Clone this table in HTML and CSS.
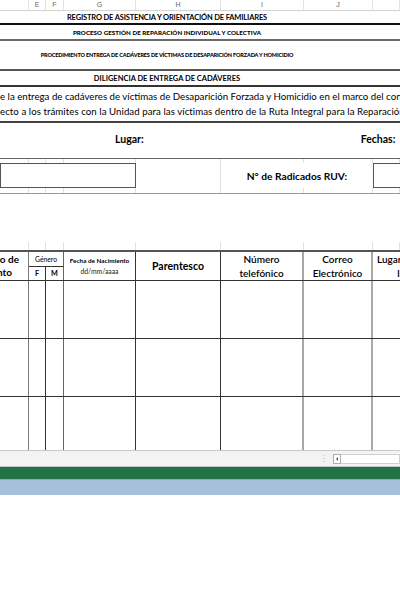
FILE: index.html
```html
<!DOCTYPE html>
<html lang="es">
<head>
<meta charset="utf-8">
<title>Registro de asistencia</title>
<link rel="stylesheet" href="styles.css">
</head>
<body>
<div class="colhead cols">
  <div></div><div>E</div><div>F</div><div>G</div><div>H</div><div>I</div><div>J</div><div></div>
</div>
<div class="band t1"><span>REGISTRO DE ASISTENCIA Y ORIENTACIÓN DE FAMILIARES</span></div>
<div class="band t2"><span>PROCESO GESTIÓN DE REPARACIÓN INDIVIDUAL Y COLECTIVA</span></div>
<div class="band t3"><span>PROCEDIMIENTO ENTREGA DE CADÁVERES DE VÍCTIMAS DE DESAPARICIÓN FORZADA Y HOMICIDIO</span></div>
<div class="band t4"><span>DILIGENCIA DE ENTREGA DE CADÁVERES</span></div>
<div class="para">
  <p>e la entrega de cadáveres de víctimas de Desaparición Forzada y Homicidio en el marco del con</p>
  <p>ecto a los trámites con la Unidad para las víctimas dentro de la Ruta Integral para la Reparación</p>
</div>
<div class="lugar"><span class="lug">Lugar:</span><span class="fech">Fechas:</span></div>
<div class="cols stub"><div></div><div></div><div></div><div></div><div></div><div></div><div></div><div></div></div>
<div class="cols boxrow">
  <div class="box1"></div>
  <div class="gl"></div>
  <div class="ruv">N° de Radicados RUV:</div>
  <div class="box2"></div>
</div>
<div class="cols stub last"><div></div><div></div><div></div><div></div><div></div><div></div><div></div><div></div></div>
<div class="gap"></div>
<div class="cols stub2"><div></div><div></div><div></div><div></div><div></div><div></div><div></div><div></div></div>
<div class="tbl">
  <div class="cols thead">
    <div class="h c1 doc"><span class="l1">Número de</span><span class="l2">documento</span></div>
    <div class="h gen">Género</div>
    <div class="h f c2">F</div>
    <div class="h m c3">M</div>
    <div class="h c4 fecha"><b>Fecha de Nacimiento</b><span>dd/mm/aaaa</span></div>
    <div class="h c5 par">Parentesco</div>
    <div class="h c6 big">Número<br>telefónico</div>
    <div class="h c7 big">Correo<br>Electrónico</div>
    <div class="h c8 lug2"><span>Lugar de</span><span class="sub">I</span></div>
  </div>
  <div class="cols drow"><div class="c1"></div><div class="c2"></div><div class="c3"></div><div class="c4"></div><div class="c5"></div><div class="c6"></div><div class="c7"></div><div class="c8"></div></div>
  <div class="cols drow"><div class="c1"></div><div class="c2"></div><div class="c3"></div><div class="c4"></div><div class="c5"></div><div class="c6"></div><div class="c7"></div><div class="c8"></div></div>
  <div class="cols drow"><div class="c1"></div><div class="c2"></div><div class="c3"></div><div class="c4"></div><div class="c5"></div><div class="c6"></div><div class="c7"></div><div class="c8"></div></div>
</div>
<div class="status">
  <span class="dots">⋮</span>
  <div class="scroll"><span class="sbtn"><i></i></span><span class="track"></span></div>
</div>
<div class="green"></div>
<div class="blue"></div>
</body>
</html>
```
FILE: styles.css
```css
* { box-sizing: border-box; margin: 0; padding: 0; }
body {
  margin: 0;
  width: 400px;
  height: 600px;
  overflow: hidden;
  background: #fff;
  font-family: Lato, "Liberation Sans", sans-serif;
  color: #000;
}
.cols {
  display: grid;
  grid-template-columns: 29px 17px 18px 72px 85px 83px 69px 27px;
}
.colhead {
  height: 11px;
  border-bottom: 1px solid #d4d4d4;
  font-size: 7px;
  color: #666;
  font-family: "Liberation Sans", sans-serif;
}
.colhead > div {
  border-right: 1px solid #e2e2e2;
  text-align: center;
  line-height: 10px;
}
.band {
  display: flex;
  justify-content: center;
  align-items: center;
  padding-right: 66px;
  white-space: nowrap;
  font-weight: 700;
}
.t1 { height: 14px; border-bottom: 2px solid #111; font-size: 7.5px; letter-spacing: -0.15px; }
.t2 { height: 16px; border-bottom: 2px solid #6a6a6a; font-size: 6.2px; font-weight: 900; letter-spacing: 0.05px; }
.t3 { height: 30px; border-bottom: 2px solid #555; font-size: 5.5px; font-weight: 900; letter-spacing: -0.15px; }
.t4 { height: 16px; border-bottom: 2px solid #333; font-size: 7.5px; }
.para {
  height: 36px;
  border-bottom: 2px solid #444;
  padding-top: 2px;
  font-size: 9.7px;
  line-height: 15px;
  white-space: nowrap;
  overflow: hidden;
}
.para p:last-child { letter-spacing: 0.05px; }
.lugar {
  height: 36px;
  border-bottom: 1px solid #666;
  padding-top: 8px;
  line-height: 17px;
  font-size: 10.5px;
  font-weight: 700;
  display: flex;
  white-space: nowrap;
}
.lug { margin-left: 115px; }
.fech { margin-left: 217px; }
.stub { height: 4px; }
.stub.last { height: 6px; border-bottom: 1px solid #999; }
.stub > div, .stub2 > div { border-right: 1px solid #e0e0e0; }
.gap { height: 48px; }
.stub2 { height: 8px; }
.boxrow { height: 25px; }
.box1 { grid-column: 1 / 5; border: 1px solid #555; }
.gl { border-right: 1px solid #e0e0e0; }
.ruv {
  grid-column: 6 / 8;
  display: flex;
  align-items: center;
  justify-content: center;
  font-weight: 700;
  font-size: 10.2px;
  white-space: nowrap;
}
.box2 { border: 1px solid #555; border-right: none; }
.tbl { height: 200px; overflow: hidden; border-top: 2px solid #555; }
.thead {
  grid-template-rows: 15px 13px;
  height: 29px;
  border-bottom: 1px solid #333;
}
.h {
  display: flex;
  flex-direction: column;
  align-items: center;
  justify-content: center;
  text-align: center;
  white-space: nowrap;
  overflow: hidden;
  grid-row: 1 / 3;
}
.c1 { border-right: 1px solid #7a7a7a; }
.c2 { border-right: 1px solid #333; }
.c3 { border-right: 1px solid #666; }
.c4 { border-right: 1px solid #333; }
.c5 { border-right: 1px solid #333; }
.c6 { border-right: 2px solid #a8a8a8; }
.c7 { border-right: 2px solid #a8a8a8; }
.doc {
  align-items: flex-end;
  font-weight: 700;
  font-size: 10px;
  line-height: 13px;
}
.doc .l1 { margin-right: 9px; }
.doc .l2 { margin-right: 16px; }
.gen {
  grid-column: 2 / 4;
  grid-row: 1;
  font-size: 6.8px;
  border-right: 1px solid #666;
  border-bottom: 1px solid #333;
}
.f, .m { grid-row: 2; font-size: 7.2px; font-weight: 700; }
.fecha { font-size: 6.4px; line-height: 10px; }
.fecha span { color: #222; font-size: 6.8px; }
.par { font-size: 10.5px; font-weight: 700; }
.big { font-size: 10px; font-weight: 600; line-height: 14px; }
.lug2 { align-items: flex-start; text-align: left; padding-left: 4px; font-size: 10px; font-weight: 600; line-height: 14px; }
.lug2 .sub { padding-left: 20px; }
.drow { height: 58px; border-bottom: 1px solid #333; }
.status {
  height: 17px;
  background: #f3f3f3;
  border-top: 1px solid #c8c8c8;
  border-bottom: 1px solid #c4c4c4;
  display: flex;
  align-items: center;
  padding-left: 320px;
}
.dots { color: #b5b5b5; font-size: 8px; width: 13px; font-family: "DejaVu Sans", sans-serif; }
.scroll { display: flex; height: 10px; flex: 1; }
.sbtn {
  width: 8px;
  height: 10px;
  border: 1px solid #b0b0b0;
  background: #fff;
  display: flex;
  align-items: center;
  justify-content: center;
}
.sbtn i {
  width: 0; height: 0;
  border-top: 2px solid transparent;
  border-bottom: 2px solid transparent;
  border-right: 2px solid #555;
}
.track { flex: 1; background: #fff; border: 1px solid #d0d0d0; border-left: none; }
.green { height: 12px; background: #217346; }
.blue { height: 16px; background: #a6bfdb; border-top: 1px solid #8ea9c7; }
```
